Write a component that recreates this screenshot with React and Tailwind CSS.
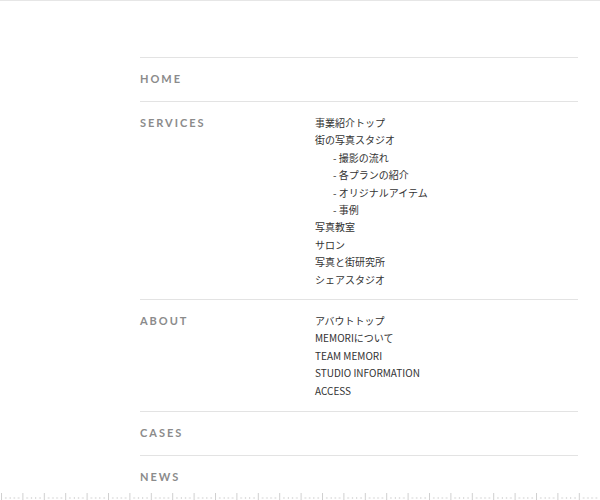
const sections = [
  { title: 'HOME', items: [] },
  {
    title: 'SERVICES',
    pb: 'pb-[11px]',
    items: [
      { label: '事業紹介トップ' },
      { label: '街の写真スタジオ' },
      { label: '- 撮影の流れ', sub: true },
      { label: '- 各プランの紹介', sub: true },
      { label: '- オリジナルアイテム', sub: true },
      { label: '- 事例', sub: true },
      { label: '写真教室' },
      { label: 'サロン' },
      { label: '写真と街研究所' },
      { label: 'シェアスタジオ' },
    ],
  },
  {
    title: 'ABOUT',
    pb: 'pb-3',
    items: [
      { label: 'アバウトトップ' },
      { label: 'MEMORIについて' },
      { label: 'TEAM MEMORI' },
      { label: 'STUDIO INFORMATION' },
      { label: 'ACCESS' },
    ],
  },
  { title: 'CASES', items: [] },
  { title: 'NEWS', items: [] },
];

function Ruler() {
  return (
    <svg className="absolute left-0 bottom-0 block w-full h-[9px]" aria-hidden="true">
      <defs>
        <pattern id="ticks" x="1" y="0" width="21.4" height="9" patternUnits="userSpaceOnUse">
          <rect x="0" y="2" width="1" height="7" fill="#cfcfcf" />
          <rect x="4.3" y="6" width="1" height="2" fill="#d6d6d6" />
          <rect x="8.6" y="6" width="1" height="2" fill="#d6d6d6" />
          <rect x="12.8" y="6" width="1" height="2" fill="#d6d6d6" />
          <rect x="17.1" y="6" width="1" height="2" fill="#d6d6d6" />
        </pattern>
      </defs>
      <rect width="100%" height="9" fill="url(#ticks)" />
    </svg>
  );
}

export default function App() {
  return (
    <div className="relative w-[600px] h-[500px] bg-white overflow-hidden border-t border-[#e6e6e6]">
      <nav className="ml-[140px] w-[438px] mt-[56px]">
        {sections.map((s) => (
          <div key={s.title} className="flex border-t border-[#e3e3e3] min-h-[44px]">
            <div className="w-[175px] pt-[11px]">
              <span
                className="block text-[11px] font-bold tracking-[0.18em] text-[#8b8b8b] leading-5"
                style={{ fontFamily: 'Lato, "Liberation Sans", sans-serif' }}
              >
                {s.title}
              </span>
            </div>
            {s.items.length > 0 && (
              <ul
                className={`pt-3 ${s.pb} text-[10px] leading-[17.4px] text-[#333]`}
                style={{ fontFamily: '"Noto Sans CJK JP", "Noto Sans", sans-serif' }}
              >
                {s.items.map((it) => (
                  <li key={it.label} className={it.sub ? 'pl-[18px]' : ''}>
                    {it.label}
                  </li>
                ))}
              </ul>
            )}
          </div>
        ))}
      </nav>
      <Ruler />
    </div>
  );
}
